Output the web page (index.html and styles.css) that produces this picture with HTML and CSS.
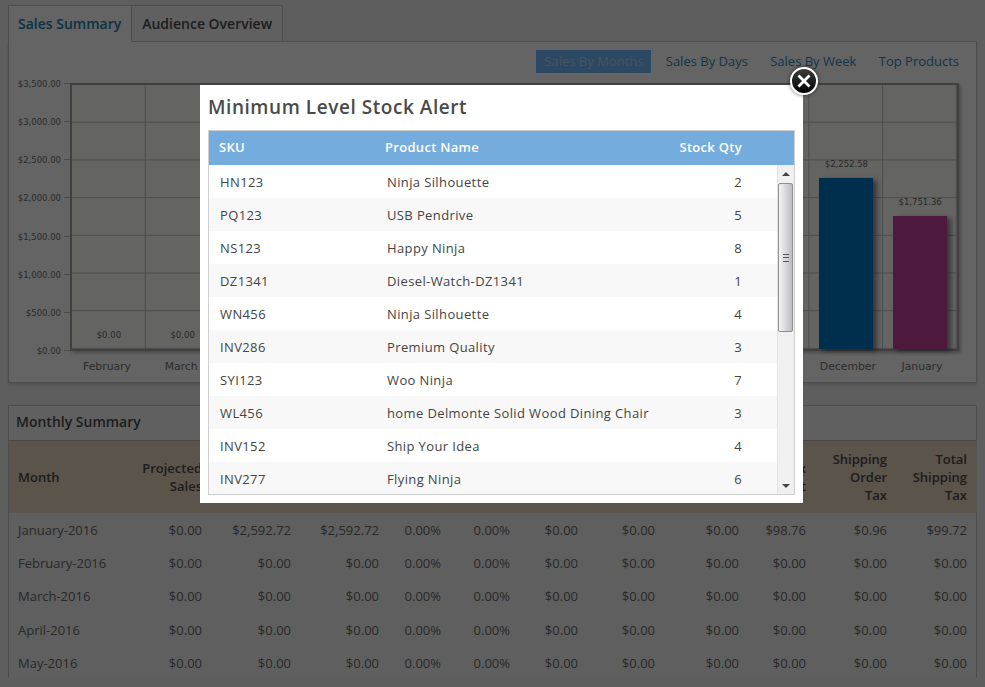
FILE: index.html
```html
<!DOCTYPE html>
<html lang="en">
<head>
    <meta charset="UTF-8">
    <meta name="viewport" content="width=device-width, initial-scale=1.0">
    <title>Sales Summary</title>
    <link rel="stylesheet" href="styles.css">
</head>
<body>

    <!-- Tabs -->
    <div class="tabs">
        <a class="tab tab-active">Sales Summary</a>
        <a class="tab">Audience Overview</a>
    </div>

    <!-- Chart panel -->
    <section class="chart-panel">
        <div class="pills">
            <a class="pill pill-active">Sales By Months</a>
            <a class="pill">Sales By Days</a>
            <a class="pill">Sales By Week</a>
            <a class="pill">Top Products</a>
        </div>
        <div class="chart">
            <div class="y-axis">
                <span>$3,500.00</span>
                <span>$3,000.00</span>
                <span>$2,500.00</span>
                <span>$2,000.00</span>
                <span>$1,500.00</span>
                <span>$1,000.00</span>
                <span>$500.00</span>
                <span>$0.00</span>
            </div>
            <div class="plot">
                <div class="col"><span class="val">$0.00</span></div>
                <div class="col"><span class="val">$0.00</span></div>
                <div class="col"></div>
                <div class="col"></div>
                <div class="col"></div>
                <div class="col"></div>
                <div class="col"></div>
                <div class="col"></div>
                <div class="col"></div>
                <div class="col"></div>
                <div class="col"><span class="val">$2,252.58</span><div class="bar bar-blue" style="height: 64.8%"></div></div>
                <div class="col"><span class="val">$1,751.36</span><div class="bar bar-purple" style="height: 50.3%"></div></div>
            </div>
            <div class="x-axis">
                <span>February</span>
                <span>March</span>
                <span></span>
                <span></span>
                <span></span>
                <span></span>
                <span></span>
                <span></span>
                <span></span>
                <span></span>
                <span>December</span>
                <span>January</span>
            </div>
        </div>
    </section>

    <!-- Monthly summary -->
    <section class="summary-panel">
        <h2 class="summary-title">Monthly Summary</h2>
        <table class="summary-table">
            <colgroup>
                <col class="c-month"><col class="c-a"><col class="c-b"><col class="c-c"><col class="c-d"><col class="c-e">
                <col class="c-f"><col class="c-g"><col class="c-h"><col class="c-i"><col class="c-j"><col class="c-k">
            </colgroup>
            <thead>
                <tr>
                    <th>Month</th>
                    <th>Projected<br>Sales</th>
                    <th></th>
                    <th></th>
                    <th></th>
                    <th></th>
                    <th></th>
                    <th></th>
                    <th></th>
                    <th>Tax<br>Amount</th>
                    <th>Shipping<br>Order<br>Tax</th>
                    <th>Total<br>Shipping<br>Tax</th>
                </tr>
            </thead>
            <tbody>
                <tr><td>January-2016</td><td>$0.00</td><td>$2,592.72</td><td>$2,592.72</td><td>0.00%</td><td>0.00%</td><td>$0.00</td><td>$0.00</td><td>$0.00</td><td>$98.76</td><td>$0.96</td><td>$99.72</td></tr>
                <tr><td>February-2016</td><td>$0.00</td><td>$0.00</td><td>$0.00</td><td>0.00%</td><td>0.00%</td><td>$0.00</td><td>$0.00</td><td>$0.00</td><td>$0.00</td><td>$0.00</td><td>$0.00</td></tr>
                <tr><td>March-2016</td><td>$0.00</td><td>$0.00</td><td>$0.00</td><td>0.00%</td><td>0.00%</td><td>$0.00</td><td>$0.00</td><td>$0.00</td><td>$0.00</td><td>$0.00</td><td>$0.00</td></tr>
                <tr><td>April-2016</td><td>$0.00</td><td>$0.00</td><td>$0.00</td><td>0.00%</td><td>0.00%</td><td>$0.00</td><td>$0.00</td><td>$0.00</td><td>$0.00</td><td>$0.00</td><td>$0.00</td></tr>
                <tr><td>May-2016</td><td>$0.00</td><td>$0.00</td><td>$0.00</td><td>0.00%</td><td>0.00%</td><td>$0.00</td><td>$0.00</td><td>$0.00</td><td>$0.00</td><td>$0.00</td><td>$0.00</td></tr>
            </tbody>
        </table>
    </section>

    <!-- Stock alert popup -->
    <div class="overlay"></div>
    <div class="modal">
        <a class="modal-close">
            <svg width="14" height="14" viewBox="0 0 14 14"><path d="M1.5 1.5l11 11M12.5 1.5l-11 11" stroke="#fff" stroke-width="2.8"/></svg>
        </a>
        <h3 class="modal-title">Minimum Level Stock Alert</h3>
        <div class="stock">
            <div class="stock-head">
                <span>SKU</span>
                <span>Product Name</span>
                <span class="qty">Stock Qty</span>
            </div>
            <div class="stock-body">
                <div class="stock-rows">
                    <div class="stock-row"><span>HN123</span><span>Ninja Silhouette</span><span class="qty">2</span></div>
                    <div class="stock-row"><span>PQ123</span><span>USB Pendrive</span><span class="qty">5</span></div>
                    <div class="stock-row"><span>NS123</span><span>Happy Ninja</span><span class="qty">8</span></div>
                    <div class="stock-row"><span>DZ1341</span><span>Diesel-Watch-DZ1341</span><span class="qty">1</span></div>
                    <div class="stock-row"><span>WN456</span><span>Ninja Silhouette</span><span class="qty">4</span></div>
                    <div class="stock-row"><span>INV286</span><span>Premium Quality</span><span class="qty">3</span></div>
                    <div class="stock-row"><span>SYI123</span><span>Woo Ninja</span><span class="qty">7</span></div>
                    <div class="stock-row"><span>WL456</span><span>home Delmonte Solid Wood Dining Chair</span><span class="qty">3</span></div>
                    <div class="stock-row"><span>INV152</span><span>Ship Your Idea</span><span class="qty">4</span></div>
                    <div class="stock-row"><span>INV277</span><span>Flying Ninja</span><span class="qty">6</span></div>
                </div>
                <div class="scrollbar">
                    <div class="scroll-btn"><span class="arrow-up"></span></div>
                    <div class="scroll-track">
                        <div class="scroll-thumb"><span class="grip"></span></div>
                    </div>
                    <div class="scroll-btn"><span class="arrow-down"></span></div>
                </div>
            </div>
        </div>
    </div>

</body>
</html>
```

FILE: styles.css
```css
/* General styles */
body {
    font-family: 'Open Sans', sans-serif;
    background-color: #ececec;
    margin: 0;
    padding: 5px 8px 0;
    color: #6f6f6f;
    font-size: 13px;
    overflow: hidden;
    height: 682px;
}

/* Tabs */
.tabs {
    display: flex;
    margin-bottom: -1px;
}

.tab {
    padding: 0 10px;
    height: 35px;
    line-height: 36px;
    font-size: 14px;
    font-weight: 600;
    color: #4a4a4a;
    background-color: #efefef;
    border: 1px solid #c0c0c0;
    border-left: 0;
}

.tab-active {
    padding-left: 9px;
    color: #1c7cab;
    background-color: #fafafa;
    border-left: 1px solid #c0c0c0;
    border-bottom-color: #fafafa;
    position: relative;
}

/* Chart panel */
.chart-panel {
    background-color: #fafafa;
    border: 1px solid #c0c0c0;
    height: 340px;
    box-shadow: 0 2px 3px rgba(0, 0, 0, 0.15);
}

.pills {
    display: flex;
    justify-content: flex-end;
    gap: 6.3px;
    padding: 8px 9px 10px 0;
}

.pill {
    padding: 0 8px;
    height: 23px;
    line-height: 23px;
    color: #3285b8;
}

.pill-active {
    background-color: #6eb5f5;
    color: #b4d2ee;
}

.chart {
    display: grid;
    grid-template-columns: 61px 889px;
    grid-template-rows: 268px auto;
}

.y-axis {
    height: 267px;
    display: flex;
    flex-direction: column;
    justify-content: space-between;
    align-items: flex-end;
    font-family: 'DejaVu Sans', sans-serif;
    font-size: 8.5px;
    color: #6c6c6c;
}

.y-axis span {
    height: 0;
    line-height: 2px;
    padding-right: 9px;
    position: relative;
}

/* little tick beside each axis label */
.y-axis span:after {
    content: "";
    position: absolute;
    right: 0;
    top: 0;
    width: 6px;
    height: 1px;
    background-color: #bbb;
}

.plot {
    display: grid;
    grid-template-columns: repeat(12, 1fr);
    box-sizing: border-box;
    border: 2px solid #a0a0a0;
    background-color: #fbf9f4;
    background-image:
        linear-gradient(to right, transparent calc(100% - 1px), #c0c0c0 calc(100% - 1px)),
        linear-gradient(to bottom, transparent calc(100% - 1px), #c0c0c0 calc(100% - 1px));
    background-size: calc(100% / 12) 100%, 100% calc(100% / 7);
    box-shadow: 2px 2px 3px rgba(0, 0, 0, 0.25);
}

.col {
    display: flex;
    flex-direction: column;
    justify-content: flex-end;
    align-items: center;
    min-width: 0;
}

.val {
    font-family: 'DejaVu Sans', sans-serif;
    font-size: 8.5px;
    line-height: 14px;
    color: #666;
    margin-bottom: 7px;
}

.bar {
    width: 54px;
    box-shadow: 4px 2px 5px rgba(0, 0, 0, 0.45);
}

.bar-blue {
    background-color: #0076c4;
}

.bar-purple {
    background-color: #c1419a;
}

.x-axis {
    grid-column: 2;
    display: grid;
    grid-template-columns: repeat(12, 1fr);
    text-align: center;
    font-family: 'DejaVu Sans', sans-serif;
    font-size: 10.8px;
    color: #707070;
    padding-top: 9px;
}

/* Monthly summary */
.summary-panel {
    margin-top: 22px;
    background-color: #eeeeee;
    border: 1px solid #c0c0c0;
    border-bottom: 0;
    height: 273px;
    box-sizing: border-box;
}

.summary-title {
    margin: 0;
    height: 34px;
    line-height: 32px;
    padding-left: 7px;
    font-size: 14px;
    font-weight: 600;
    color: #4a4a4a;
    background-color: #f0f0f0;
    border-bottom: 1px solid #b4b4b4;
}

.summary-table {
    width: 968px;
    table-layout: fixed;
    border-collapse: collapse;
}

.c-month { width: 120px; }
.c-a { width: 83px; }
.c-b { width: 89px; }
.c-c { width: 88px; }
.c-d { width: 62px; }
.c-e { width: 69px; }
.c-f { width: 68px; }
.c-g { width: 77px; }
.c-h { width: 84px; }
.c-i { width: 67px; }
.c-j { width: 81px; }
.c-k { width: 80px; }

.summary-table th,
.summary-table td {
    padding: 0 10px 0 0;
    text-align: right;
}

.summary-table th {
    height: 72px;
    background-color: #e0d2ba;
    color: #4a4a4a;
    font-weight: 600;
    font-size: 13px;
    line-height: 18px;
}

.summary-table td {
    height: 33.4px;
    color: #666;
}

.summary-table th:first-child,
.summary-table td:first-child {
    text-align: left;
    padding-left: 9px;
}

/* Popup */
.overlay {
    position: fixed;
    inset: 0;
    background-color: rgba(0, 0, 0, 0.6);
}

.modal {
    position: fixed;
    left: 200px;
    top: 85px;
    width: 603px;
    height: 418px;
    box-sizing: border-box;
    padding: 0 8px;
    background-color: #fff;
}

.modal-close {
    position: absolute;
    right: -15px;
    top: -18px;
    width: 24px;
    height: 24px;
    border: 2px solid #fff;
    border-radius: 50%;
    background: linear-gradient(#3c3c3c, #000);
    box-shadow: 0 0 4px rgba(0, 0, 0, 0.6);
    display: flex;
    align-items: center;
    justify-content: center;
}

.modal-title {
    margin: 0;
    height: 45px;
    line-height: 44px;
    font-size: 19px;
    font-weight: 600;
    color: #4a4a4a;
    letter-spacing: 0.55px;
}

.stock {
    border: 1px solid #cfcfcf;
    height: 365px;
    box-sizing: border-box;
    overflow: hidden;
}

.stock-head,
.stock-row {
    display: grid;
    align-items: center;
}

.stock-head {
    grid-template-columns: 166px 1fr auto;
    height: 32px;
    padding: 0 52px 2px 10px;
    background-color: #74acdd;
    color: #fff;
    font-weight: 600;
    letter-spacing: 0.3px;
}

.stock-body {
    display: flex;
    height: 330px;
}

.stock-rows {
    flex: 1;
    overflow: hidden;
}

.stock-row {
    grid-template-columns: 167px 1fr auto;
    height: 33px;
    padding: 0 35px 0 11px;
    color: #444;
    letter-spacing: 0.38px;
    background-color: #fff;
}

.stock-row:nth-child(even) {
    background-color: #f8f8f8;
}

.stock-row .qty {
    min-width: 30px;
    text-align: right;
}

.stock-head .qty {
    text-align: right;
}

/* Scrollbar drawn by hand so it always shows */
.scrollbar {
    width: 16px;
    display: flex;
    flex-direction: column;
    background-color: #f0f0f0;
    border-left: 1px solid #e4e4e4;
}

.scroll-btn {
    height: 18px;
    display: flex;
    align-items: center;
    justify-content: center;
    flex: none;
}

.arrow-up {
    border: 4px solid transparent;
    border-top: 0;
    border-bottom: 4px solid #444;
}

.arrow-down {
    border: 4px solid transparent;
    border-bottom: 0;
    border-top: 4px solid #444;
}

.scroll-track {
    flex: 1;
}

.scroll-thumb {
    height: 149px;
    box-sizing: border-box;
    margin-right: 1px;
    border: 1px solid #8f8f8f;
    border-radius: 2px;
    background: linear-gradient(to right, #f4f4f4, #d3d3d9 60%, #bcbcc2);
    display: flex;
    align-items: center;
    justify-content: center;
}

.grip {
    width: 6px;
    height: 6px;
    border-top: 1px solid #555;
    border-bottom: 1px solid #555;
    background: linear-gradient(#555, #555) center / 100% 1px no-repeat;
}
```
